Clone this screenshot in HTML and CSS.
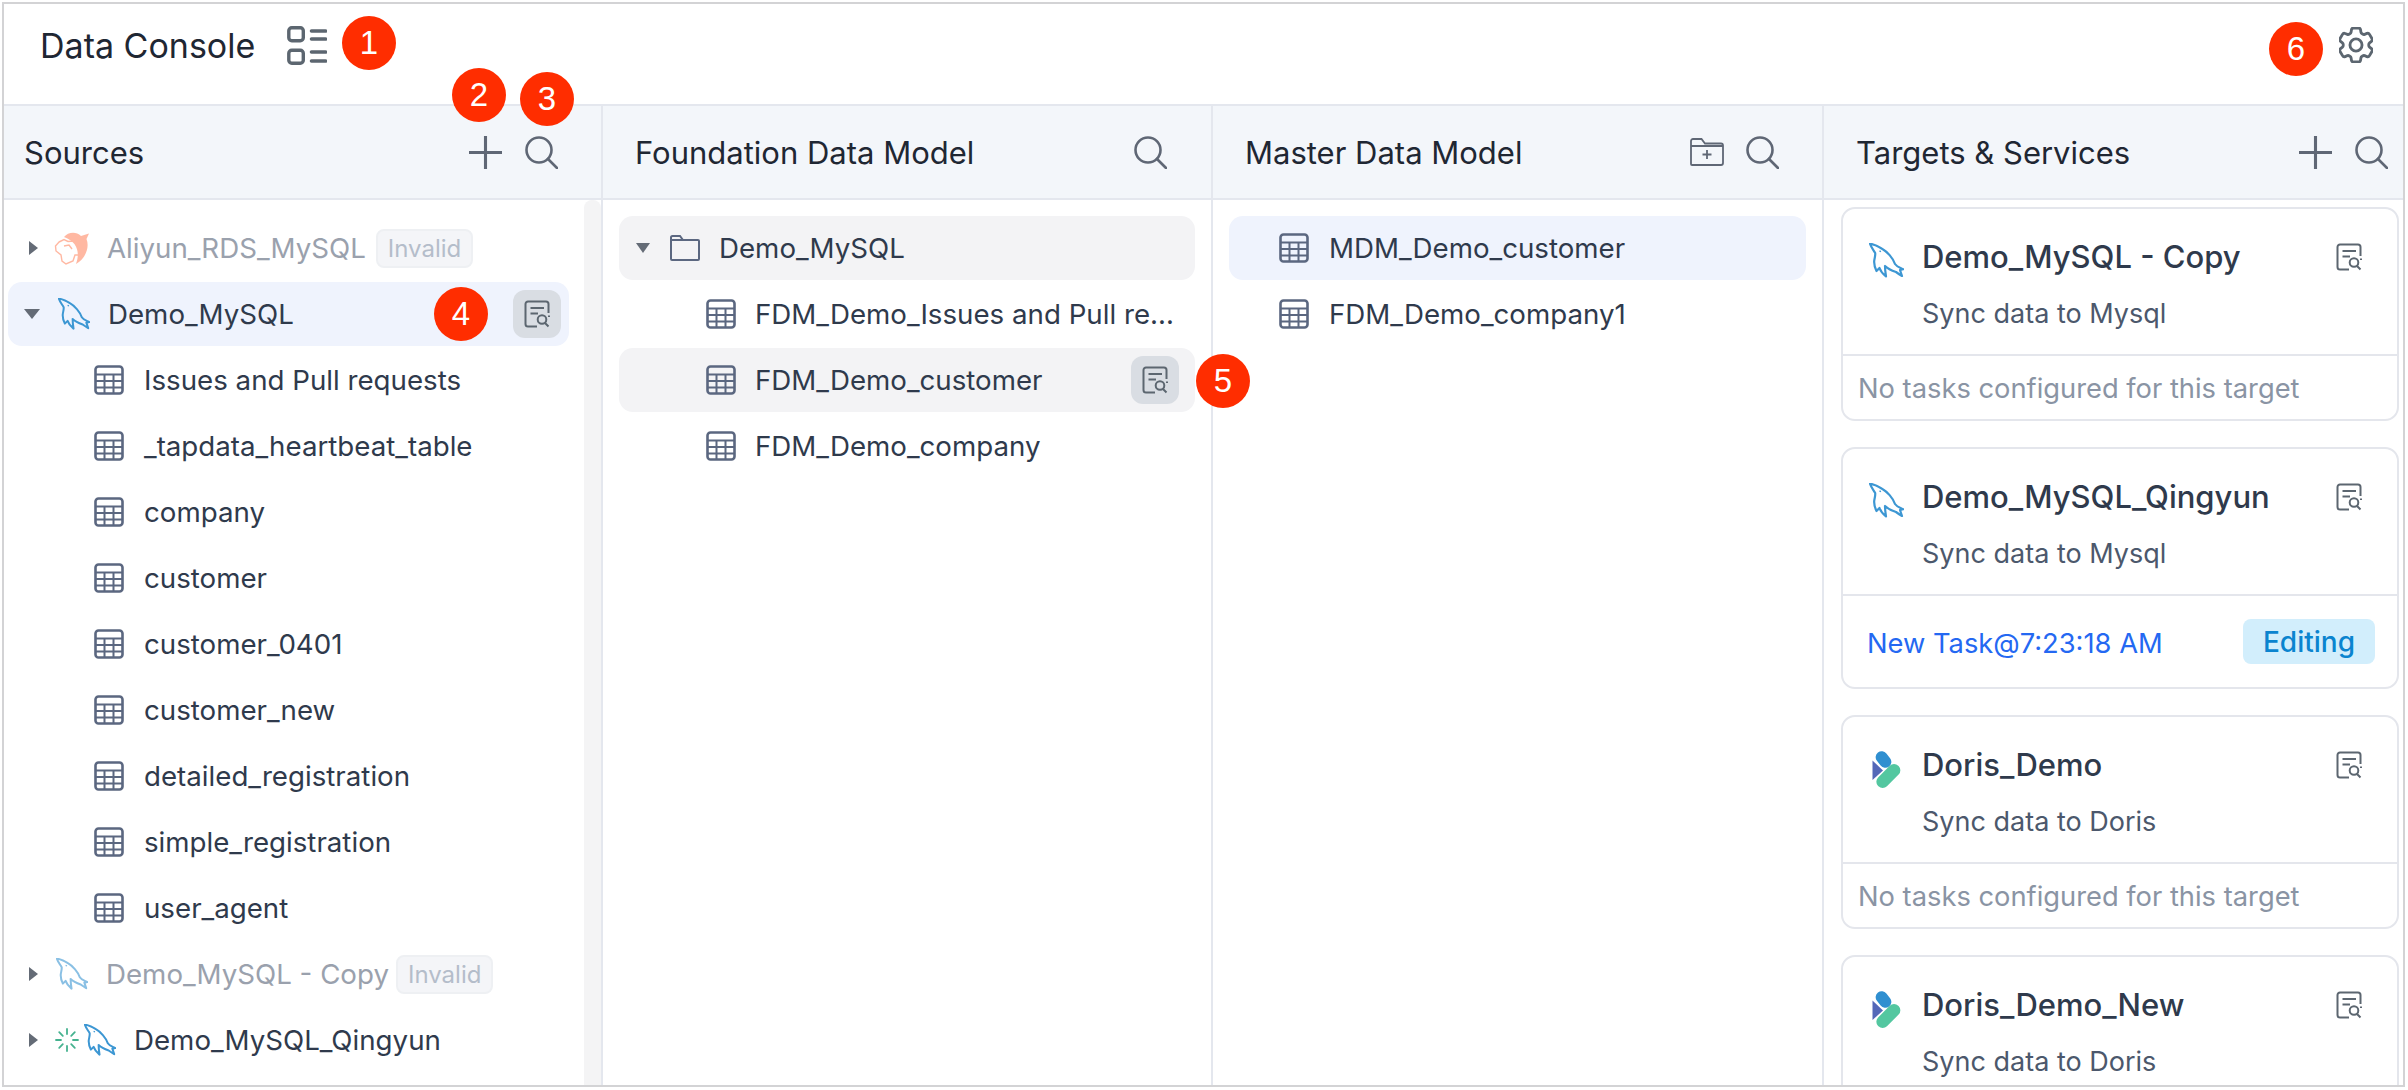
FILE: index.html
```html
<!DOCTYPE html>
<html lang="en">
<head>
<meta charset="utf-8">
<title>Data Console</title>
<link rel="stylesheet" href="styles.css">
</head>
<body>
<svg class="sprite" width="0" height="0" aria-hidden="true">
  <symbol id="i-dolphin" viewBox="0 0 35 35">
    <path d="M1 0.800C4 1 8 2.500 13 5.700C18 8.500 24 15 26 21C28 24 32 25 34.200 26.300L31 27L33 33C30.500 31.500 29 30.500 27 29C24 28 19 26 16 23C16 27 16.500 30 17 33.500C14 31 11.500 28 10.500 25L7.500 28C5.500 24 5 21 5.200 18C5.500 15 6.500 13 6.200 10C4.500 7 2 4 1 0.800Z" fill="none" stroke="currentColor" stroke-width="2.200" stroke-linejoin="round"/>
    <path d="M10.500 8L12 8.600" fill="none" stroke="currentColor" stroke-width="1.400"/>
  </symbol>
  <symbol id="i-table" viewBox="0 0 30 30">
    <rect x="1.500" y="1.500" width="27" height="27" rx="3" fill="none" stroke="currentColor" stroke-width="2.600"/>
    <path d="M1.500 9.500H28.500M1.500 16H28.500M1.500 22.500H28.500M10.500 9.500V28.500M19.500 9.500V28.500" fill="none" stroke="currentColor" stroke-width="2"/>
  </symbol>
  <symbol id="i-doc" viewBox="0 0 26 28">
    <path d="M24.500 13V4A2.500 2.500 0 0 0 22 1.500H4A2.500 2.500 0 0 0 1.500 4V24A2.500 2.500 0 0 0 4 26.500H13" fill="none" stroke="currentColor" stroke-width="2"/>
    <path d="M6.500 8H20M6.500 13.500H14" fill="none" stroke="currentColor" stroke-width="2"/>
    <circle cx="18" cy="19.500" r="4.300" fill="none" stroke="currentColor" stroke-width="2"/>
    <path d="M21 23L24.500 26.500M25 15.500V17" fill="none" stroke="currentColor" stroke-width="2"/>
  </symbol>
  <symbol id="i-plus" viewBox="0 0 32 32">
    <path d="M16 0V32M0 16H32" fill="none" stroke="currentColor" stroke-width="3" stroke-linecap="round"/>
  </symbol>
  <symbol id="i-search" viewBox="0 0 33 33">
    <circle cx="14" cy="14" r="12.500" fill="none" stroke="currentColor" stroke-width="2.600"/>
    <path d="M23 23L32 32" fill="none" stroke="currentColor" stroke-width="2.600" stroke-linecap="round"/>
  </symbol>
  <symbol id="i-doris" viewBox="0 0 29 39">
    <path d="M0.500 10.500L11 20.500L0.500 30Z" fill="#5468b8"/>
    <rect x="5.500" y="0.500" width="12" height="18" rx="6" transform="rotate(-38 11.500 9.500)" fill="#2f8fd0"/>
    <rect x="2" y="20" width="28.500" height="12.500" rx="6" transform="rotate(-45 16 26)" fill="#53c7a0"/>
  </symbol>
</svg>

<div class="frame">
  <header class="topbar">
    <span class="app-title">Data Console</span>
    <svg class="layout-icon" viewBox="0 0 40 39">
      <rect x="1.800" y="1.800" width="14.500" height="13" rx="3" fill="none" stroke="currentColor" stroke-width="3.400"/>
      <rect x="1.800" y="24.200" width="14.500" height="13" rx="3" fill="none" stroke="currentColor" stroke-width="3.400"/>
      <path d="M24.500 5H38.500M24.500 13H38.500M24.500 26H38.500M24.500 35H38.500" fill="none" stroke="currentColor" stroke-width="3.600" stroke-linecap="round"/>
    </svg>
    <svg class="gear-icon" viewBox="3 2.500 18 19">
      <path d="M9.594 3.940c.09-.542.56-.94 1.110-.94h2.593c.55 0 1.020.398 1.110.94l.213 1.281c.063.374.313.686.645.87.074.04.147.083.22.127.325.196.72.257 1.075.124l1.217-.456a1.125 1.125 0 011.370.49l1.296 2.247a1.125 1.125 0 01-.26 1.431l-1.003.827c-.293.24-.438.613-.431.992a6.759 6.759 0 010 .255c-.007.378.138.75.43.99l1.005.828c.424.35.534.954.26 1.430l-1.298 2.247a1.125 1.125 0 01-1.369.491l-1.217-.456c-.355-.133-.75-.072-1.076.124a6.570 6.570 0 01-.22.128c-.331.183-.581.495-.644.869l-.213 1.280c-.09.543-.56.941-1.110.941h-2.594c-.55 0-1.020-.398-1.110-.94l-.213-1.281c-.062-.374-.312-.686-.644-.87a6.520 6.520 0 01-.22-.127c-.325-.196-.72-.257-1.076-.124l-1.217.456a1.125 1.125 0 01-1.369-.49l-1.297-2.247a1.125 1.125 0 01.26-1.431l1.004-.827c.292-.24.437-.613.43-.992a6.932 6.932 0 010-.255c.007-.378-.138-.75-.43-.99l-1.004-.828a1.125 1.125 0 01-.26-1.430l1.297-2.247a1.125 1.125 0 011.370-.491l1.216.456c.356.133.751.072 1.076-.124.072-.044.146-.087.22-.128.332-.183.582-.495.644-.869l.214-1.281z" fill="none" stroke="currentColor" stroke-width="1.500" stroke-linejoin="round"/>
      <circle cx="12" cy="12" r="3.200" fill="none" stroke="currentColor" stroke-width="1.500"/>
    </svg>
  </header>

  <main class="columns">
    <section class="col col-sources">
      <div class="col-head">
        <h2 class="col-title">Sources</h2>
        <svg class="hd-icon hd-plus"><use href="#i-plus"/></svg>
        <svg class="hd-icon"><use href="#i-search"/></svg>
      </div>
      <div class="col-body">
        <div class="tree tree-sources">
          <div class="row row-source is-faded">
            <span class="arrow arrow-right"></span>
            <svg class="src-icon aliyun" viewBox="0 0 36 36">
              <path d="M10 7C14 2 22 1 27 6L35 3.500L32.500 9C36 18 31 29 22 34C26 23 24 12 10 7Z" fill="currentColor"/>
              <path d="M5 12L10 9.500L14 11.500L20 11L24 15L27 19L25 25L21 25L19 31L12 34L8 31L7 25L2 21L1.500 16Z M10 16L15 15L18 19" fill="none" stroke="currentColor" stroke-width="1.400"/>
            </svg>
            <span class="row-name">Aliyun_RDS_MySQL</span>
            <span class="tag tag-wide-gap">Invalid</span>
          </div>
          <div class="row row-source is-selected">
            <span class="arrow arrow-down"></span>
            <svg class="src-icon dolphin"><use href="#i-dolphin"/></svg>
            <span class="row-name">Demo_MySQL</span>
            <span class="row-btn"><svg class="doc-icon"><use href="#i-doc"/></svg></span>
          </div>
          <div class="row row-child"><svg class="tbl-icon"><use href="#i-table"/></svg><span class="row-name">Issues and Pull requests</span></div>
          <div class="row row-child"><svg class="tbl-icon"><use href="#i-table"/></svg><span class="row-name">_tapdata_heartbeat_table</span></div>
          <div class="row row-child"><svg class="tbl-icon"><use href="#i-table"/></svg><span class="row-name">company</span></div>
          <div class="row row-child"><svg class="tbl-icon"><use href="#i-table"/></svg><span class="row-name">customer</span></div>
          <div class="row row-child"><svg class="tbl-icon"><use href="#i-table"/></svg><span class="row-name">customer_0401</span></div>
          <div class="row row-child"><svg class="tbl-icon"><use href="#i-table"/></svg><span class="row-name">customer_new</span></div>
          <div class="row row-child"><svg class="tbl-icon"><use href="#i-table"/></svg><span class="row-name">detailed_registration</span></div>
          <div class="row row-child"><svg class="tbl-icon"><use href="#i-table"/></svg><span class="row-name">simple_registration</span></div>
          <div class="row row-child"><svg class="tbl-icon"><use href="#i-table"/></svg><span class="row-name">user_agent</span></div>
          <div class="row row-source is-faded">
            <span class="arrow arrow-right"></span>
            <svg class="src-icon dolphin"><use href="#i-dolphin"/></svg>
            <span class="row-name">Demo_MySQL - Copy</span>
            <span class="tag">Invalid</span>
          </div>
          <div class="row row-source">
            <span class="arrow arrow-right"></span>
            <svg class="spinner" viewBox="0 0 24 24">
              <path d="M12 1V6M12 18V23M1 12H6M18 12H23M4.200 4.200L7.800 7.800M16.200 16.200L19.800 19.800M4.200 19.800L7.800 16.200M16.200 7.800L19.800 4.200" fill="none" stroke="#45b28f" stroke-width="1.800" stroke-linecap="round"/>
            </svg>
            <svg class="src-icon dolphin dolphin-tight"><use href="#i-dolphin"/></svg>
            <span class="row-name">Demo_MySQL_Qingyun</span>
          </div>
        </div>
        <div class="scrollbar"></div>
      </div>
    </section>

    <section class="col col-fdm">
      <div class="col-head">
        <h2 class="col-title">Foundation Data Model</h2>
        <svg class="hd-icon"><use href="#i-search"/></svg>
      </div>
      <div class="col-body">
        <div class="tree tree-pad">
          <div class="row row-folder is-hover">
            <span class="arrow arrow-down arrow-small"></span>
            <svg class="folder-icon" viewBox="0 0 30 26">
              <path d="M1 24V2.500A1.500 1.500 0 0 1 2.500 1H10L13 5H28A1 1 0 0 1 29 6V24A1 1 0 0 1 28 25H2A1 1 0 0 1 1 24ZM1 5H13" fill="none" stroke="currentColor" stroke-width="2"/>
            </svg>
            <span class="row-name">Demo_MySQL</span>
          </div>
          <div class="row row-fdm"><svg class="tbl-icon"><use href="#i-table"/></svg><span class="row-name row-clip">FDM_Demo_Issues and Pull requests</span></div>
          <div class="row row-fdm is-hover"><svg class="tbl-icon"><use href="#i-table"/></svg><span class="row-name">FDM_Demo_customer</span><span class="row-btn"><svg class="doc-icon"><use href="#i-doc"/></svg></span></div>
          <div class="row row-fdm"><svg class="tbl-icon"><use href="#i-table"/></svg><span class="row-name">FDM_Demo_company</span></div>
        </div>
      </div>
    </section>

    <section class="col col-mdm">
      <div class="col-head">
        <h2 class="col-title">Master Data Model</h2>
        <svg class="hd-folder" viewBox="0 0 34 28">
          <path d="M1 26V3A2 2 0 0 1 3 1H11.500L15 5.500H31A2 2 0 0 1 33 7.500V25A2 2 0 0 1 31 27H2A1 1 0 0 1 1 26ZM1 8H33M17 12V21M12.500 16.500H21.500" fill="none" stroke="currentColor" stroke-width="1.800"/>
        </svg>
        <svg class="hd-icon hd-search-mdm"><use href="#i-search"/></svg>
      </div>
      <div class="col-body">
        <div class="tree tree-pad">
          <div class="row row-mdm is-selected"><svg class="tbl-icon"><use href="#i-table"/></svg><span class="row-name">MDM_Demo_customer</span></div>
          <div class="row row-mdm"><svg class="tbl-icon"><use href="#i-table"/></svg><span class="row-name">FDM_Demo_company1</span></div>
        </div>
      </div>
    </section>

    <section class="col col-targets">
      <div class="col-head">
        <h2 class="col-title">Targets &amp; Services</h2>
        <svg class="hd-icon hd-plus"><use href="#i-plus"/></svg>
        <svg class="hd-icon"><use href="#i-search"/></svg>
      </div>
      <div class="cards">
        <article class="card">
          <div class="card-top">
            <svg class="card-icon dolphin"><use href="#i-dolphin"/></svg>
            <div class="card-text"><div class="card-title">Demo_MySQL - Copy</div><div class="card-sub">Sync data to Mysql</div></div>
            <svg class="card-doc"><use href="#i-doc"/></svg>
          </div>
          <div class="card-foot card-foot-empty">No tasks configured for this target</div>
        </article>
        <article class="card">
          <div class="card-top">
            <svg class="card-icon dolphin"><use href="#i-dolphin"/></svg>
            <div class="card-text"><div class="card-title">Demo_MySQL_Qingyun</div><div class="card-sub">Sync data to Mysql</div></div>
            <svg class="card-doc"><use href="#i-doc"/></svg>
          </div>
          <div class="card-foot card-foot-task"><span class="task-link">New Task@7:23:18 AM</span><span class="status">Editing</span></div>
        </article>
        <article class="card">
          <div class="card-top">
            <svg class="card-icon doris"><use href="#i-doris"/></svg>
            <div class="card-text"><div class="card-title">Doris_Demo</div><div class="card-sub">Sync data to Doris</div></div>
            <svg class="card-doc"><use href="#i-doc"/></svg>
          </div>
          <div class="card-foot card-foot-empty">No tasks configured for this target</div>
        </article>
        <article class="card">
          <div class="card-top">
            <svg class="card-icon doris"><use href="#i-doris"/></svg>
            <div class="card-text"><div class="card-title">Doris_Demo_New</div><div class="card-sub">Sync data to Doris</div></div>
            <svg class="card-doc"><use href="#i-doc"/></svg>
          </div>
        </article>
      </div>
    </section>
  </main>

  <span class="callout callout-1">1</span>
  <span class="callout callout-2">2</span>
  <span class="callout callout-3">3</span>
  <span class="callout callout-4">4</span>
  <span class="callout callout-5">5</span>
  <span class="callout callout-6">6</span>
</div>
</body>
</html>
```

FILE: styles.css
```css
* { box-sizing: border-box; }
html, body { margin: 0; padding: 0; background: #fff; }
body {
  width: 2408px;
  height: 1090px;
  padding: 2px 3px 3px 2px;
  overflow: hidden;
  font-family: Inter, "Noto Sans", sans-serif;
  color: #2f3a4c;
}
.sprite { position: absolute; }
.frame {
  position: relative;
  width: 100%;
  height: 100%;
  display: flex;
  flex-direction: column;
  border: 2px solid #d3d3d5;
  background: #fff;
  overflow: hidden;
}
.topbar {
  flex: none;
  height: 102px;
  display: flex;
  align-items: center;
  padding: 0 30px 18px 36px;
  border-bottom: 2px solid #e4e7ee;
}
.app-title { font-size: 34px; font-weight: 400; color: #1f2733; }
.layout-icon { width: 40px; height: 39px; margin-left: 32px; color: #5c6670; }
.gear-icon { width: 34px; height: 36px; margin-left: auto; color: #5c6670; }

.columns { flex: 1; min-height: 0; display: flex; }
.col { display: flex; flex-direction: column; min-width: 0; border-right: 2px solid #e4e7ee; }
.col-sources { width: 599px; }
.col-fdm { width: 610px; }
.col-mdm { width: 611px; }
.col-targets { flex: 1; border-right: 0; }

.col-head {
  flex: none;
  height: 94px;
  display: flex;
  align-items: center;
  background: #f3f6fa;
  border-bottom: 2px solid #e4e7ee;
}
.col-title { margin: 0; font-size: 31px; font-weight: 400; color: #1f2733; }
.col-sources .col-title { margin-left: 20px; margin-right: auto; }
.col-fdm .col-title { margin-left: 32px; margin-right: auto; }
.col-mdm .col-title { margin-left: 32px; margin-right: auto; }
.col-targets .col-title { margin-left: 32px; margin-right: auto; }
.hd-icon { width: 33px; height: 33px; color: #5f6775; flex: none; }
.col-sources .hd-icon:last-child { margin-right: 43px; }
.col-fdm .hd-icon:last-child { margin-right: 44px; }
.col-mdm .hd-icon:last-child { margin-right: 43px; }
.col-targets .hd-icon:last-child { margin-right: 15px; }
.hd-plus { margin-right: 23px; }
.hd-folder { width: 34px; height: 28px; color: #5f6775; flex: none; }
.hd-search-mdm { margin-left: 22px; }

.col-body { flex: 1; min-height: 0; display: flex; overflow: hidden; }
.tree { flex: 1; min-width: 0; padding-top: 16px; }
.tree-sources { padding-left: 4px; padding-right: 15px; }
.tree-pad { padding-left: 16px; padding-right: 16px; }
.scrollbar { flex: none; width: 17px; background: #f4f4f5; border-radius: 8px 8px 0 0; }

.row {
  height: 64px;
  margin-bottom: 2px;
  display: flex;
  align-items: center;
  border-radius: 14px;
  font-size: 27.700px;
  white-space: nowrap;
}
.row-name { color: #2f3a4c; }
.is-selected { background: #eff3fd; }
.is-hover { background: #f3f3f5; }
.row-source { padding-left: 12px; }
.row-child { padding-left: 86px; }
.row-fdm { padding-left: 87px; padding-right: 16px; }
.row-fdm .tbl-icon { margin-right: 19px; }
.row-mdm { padding-left: 50px; }
.row-folder { padding-left: 17px; }
.row-clip { flex: 1; min-width: 0; overflow: hidden; text-overflow: ellipsis; }

.arrow { flex: none; display: block; width: 0; height: 0; border-style: solid; border-color: transparent; }
.arrow-right { margin-left: 9px; margin-right: 18px; border-width: 7px 0 7px 9px; border-left-color: #646b76; }
.arrow-down { margin-left: 4px; margin-right: 18px; border-width: 10px 8px 0 8px; border-top-color: #646b76; }
.arrow-small { margin-left: 0; margin-right: 20px; border-width: 10px 7px 0 7px; }

.src-icon { flex: none; width: 32px; height: 32px; margin-right: 18px; }
.dolphin { color: #3d97d3; }
.dolphin-tight { margin-left: 5px; }
.aliyun { width: 36px; height: 36px; margin-left: -2px; margin-right: 17px; color: #ff8a66; }
.spinner { flex: none; width: 24px; height: 24px; margin-right: 0; margin-left: -1px; }
.is-faded .src-icon { opacity: 0.6; }
.is-faded .row-name { color: #9aa1ad; }
.tag {
  margin-left: 7px;
  height: 39px;
  padding: 0 10px;
  display: flex;
  align-items: center;
  background: #f4f5f8;
  border: 2px solid #eef0f3;
  border-radius: 8px;
  font-size: 24px;
  color: #b4bdca;
}
.tag-wide-gap { margin-left: 10px; }
.tbl-icon { flex: none; width: 30px; height: 30px; margin-right: 20px; color: #5b6780; }
.row-btn {
  flex: none;
  margin-left: auto;
  margin-right: 8px;
  width: 48px;
  height: 48px;
  display: flex;
  align-items: center;
  justify-content: center;
  background: #d9dde3;
  border-radius: 12px;
}
.doc-icon { width: 26px; height: 28px; color: #5c6670; }
.row-fdm .row-btn { margin-right: 0; }
.folder-icon { flex: none; width: 30px; height: 26px; margin-right: 19px; color: #5b6780; }

.cards { flex: 1; min-height: 0; padding: 7px 4px 0 17px; overflow: hidden; display: flex; flex-direction: column; gap: 26px; }
.card { flex: none; border: 2px solid #e4e6ec; border-radius: 14px; }
.card-top { height: 145px; display: flex; align-items: flex-start; padding: 34px 35px 0 26px; }
.card-icon { flex: none; width: 35px; height: 35px; margin-right: 18px; }
.card-icon.doris { width: 29px; height: 39px; margin: -1px 21px 0 3px; }
.card-text { flex: 1; min-width: 0; margin-top: -6px; }
.card-title { height: 40px; line-height: 40px; font-size: 31px; font-weight: 500; color: #2f3a4c; }
.card-sub { margin-top: 19px; height: 36px; line-height: 36px; font-size: 27px; color: #4c586c; }
.card-doc { flex: none; width: 26px; height: 28px; color: #5c6670; }
.card-foot { border-top: 2px solid #e4e6ec; display: flex; align-items: center; font-size: 27.300px; }
.card-foot-empty { height: 65px; padding: 2px 0 0 15px; color: #8a94a4; }
.card-foot-task { height: 93px; padding: 0 22px 0 24px; justify-content: space-between; }
.task-link { color: #2468f2; padding-top: 4px; }
.status {
  width: 132px;
  height: 45px;
  display: flex;
  align-items: center;
  justify-content: center;
  background: #d2eefc;
  border-radius: 8px;
  font-size: 28px;
  font-weight: 500;
  color: #0b84cf;
}

.callout {
  position: absolute;
  width: 54px;
  height: 54px;
  display: flex;
  align-items: center;
  justify-content: center;
  border-radius: 50%;
  background: #ff2d00;
  color: #fff;
  font-family: "Liberation Sans", Arial, sans-serif;
  font-size: 33px;
}
.callout-1 { left: 338px; top: 12px; }
.callout-2 { left: 448px; top: 64px; }
.callout-3 { left: 516px; top: 68px; }
.callout-4 { left: 430px; top: 283px; }
.callout-5 { left: 1192px; top: 350px; }
.callout-6 { left: 2265px; top: 18px; }
```
